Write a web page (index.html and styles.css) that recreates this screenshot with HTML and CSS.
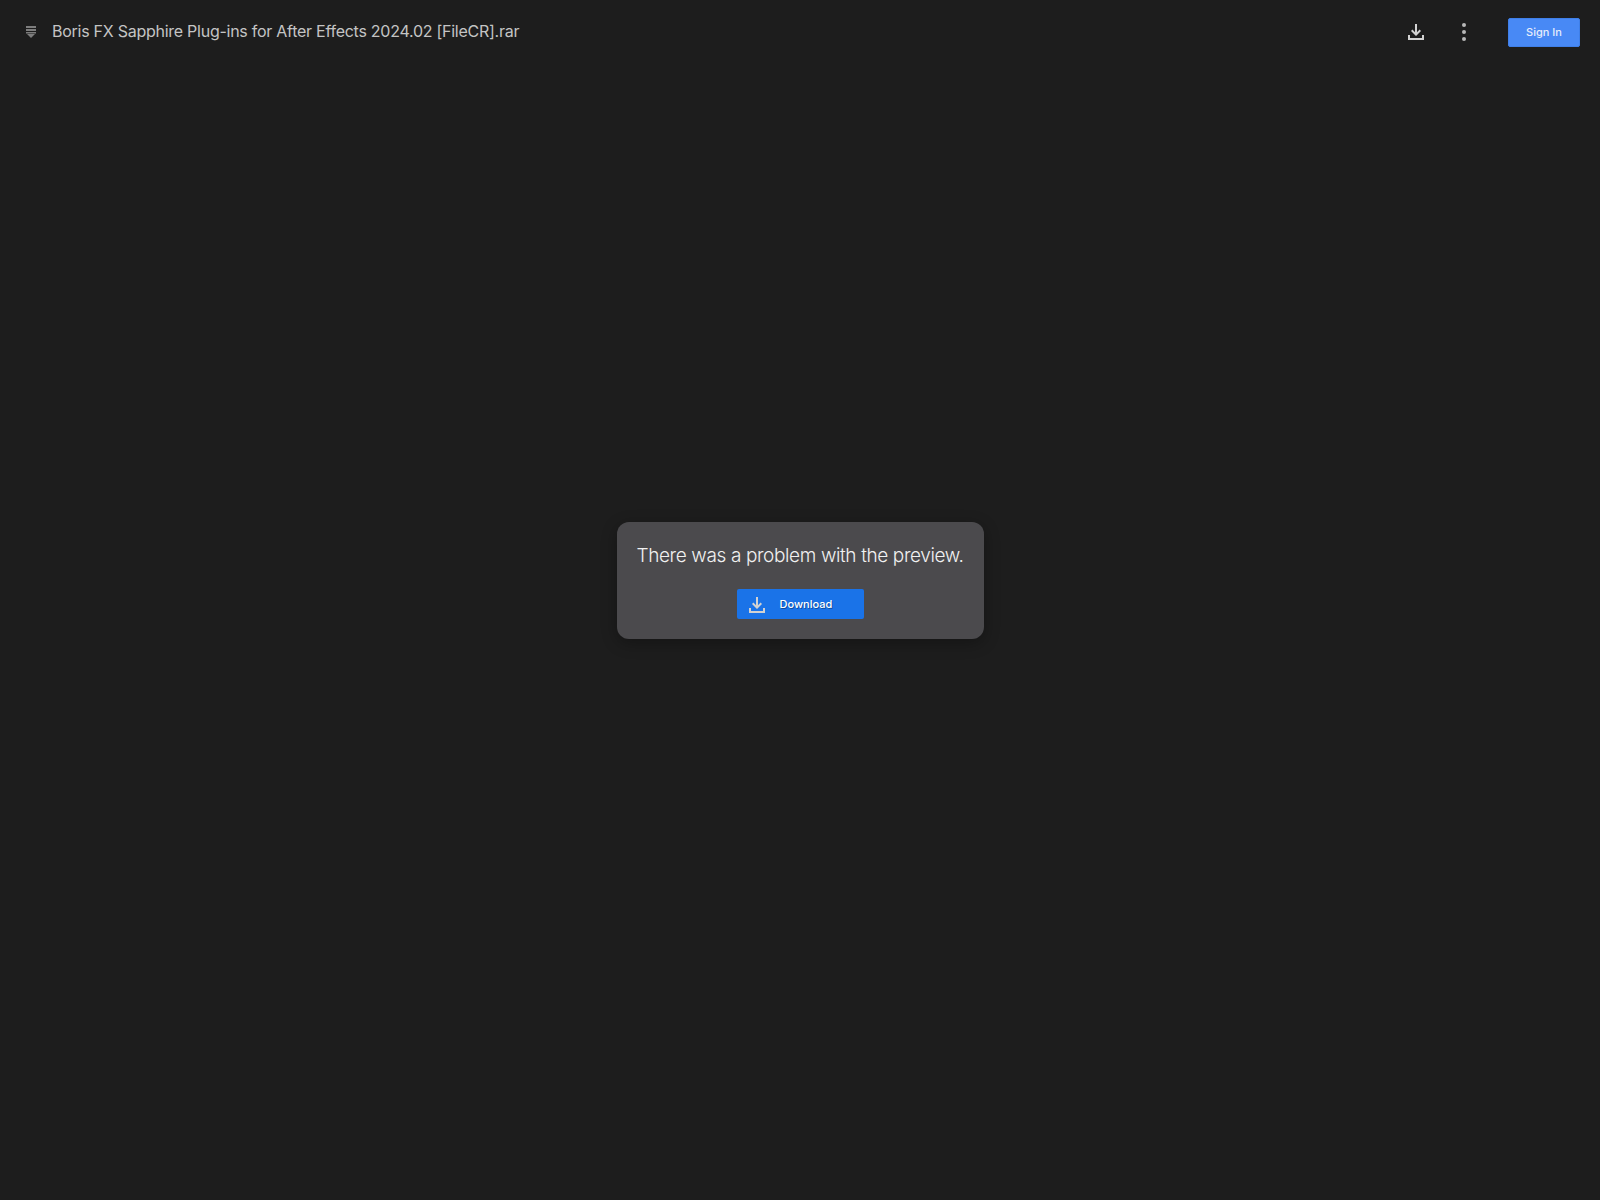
FILE: index.html
```html
<!DOCTYPE html>
<html lang="en">
<head>
<meta charset="utf-8">
<title>Boris FX Sapphire Plug-ins for After Effects 2024.02 [FileCR].rar</title>
<link rel="stylesheet" href="styles.css">
</head>
<body>
<div class="page">
  <header class="topbar">
    <div class="file">
      <svg class="file-icon" width="10" height="12" viewBox="0 0 10 12"><path fill="#7d7d7d" d="M0 0h10v2H0zM0 3h10v2H0zM0 6h10v1.500H0zM1 8h8L5 12z"/></svg>
      <span class="file-name">Boris FX Sapphire Plug-ins for After Effects 2024.02 [FileCR].rar</span>
    </div>
    <div class="actions">
      <button class="icon-btn"><svg width="24" height="24" viewBox="0 0 24 24"><path fill="#d2d2d2" d="M18 15v3H6v-3H4v5h16v-5h-2zm-1-4l-1.410-1.410L13 12.170V4h-2v8.170L8.410 9.590 7 11l5 5 5-5z"/></svg></button>
      <button class="icon-btn more"><svg width="24" height="24" viewBox="0 0 24 24"><g fill="#b8b8b8"><circle cx="12" cy="5" r="2"/><circle cx="12" cy="12" r="2"/><circle cx="12" cy="19" r="2"/></g></svg></button>
      <button class="signin">Sign In</button>
    </div>
  </header>
  <main class="stage">
    <div class="dialog">
      <p class="message">There was a problem with the preview.</p>
      <button class="download">
        <svg width="24" height="24" viewBox="0 0 24 24"><path fill="#d2d2d2" d="M18 15v3H6v-3H4v5h16v-5h-2zm-1-4l-1.410-1.410L13 12.170V4h-2v8.170L8.410 9.590 7 11l5 5 5-5z"/></svg>
        <span class="download-label">Download</span>
      </button>
    </div>
  </main>
</div>
</body>
</html>
```
FILE: styles.css
```css
* { box-sizing: border-box; }
html, body { margin: 0; height: 100%; }
body { background: #1d1d1d; font-family: "Inter", "Liberation Sans", sans-serif; }
.page { height: 1200px; display: flex; flex-direction: column; }
.topbar { height: 64px; display: flex; align-items: center; justify-content: space-between; padding: 0 20px 0 26px; flex: none; }
.file { display: flex; align-items: center; gap: 16px; }
.file-icon { display: block; }
.file-name { color: #c4c4c4; font-size: 16px; font-weight: 400; line-height: 20px; letter-spacing: -0.26px; white-space: nowrap; margin-top: -2px; }
.actions { display: flex; align-items: center; }
button { border: 0; padding: 0; font-family: inherit; cursor: pointer; }
.icon-btn { width: 24px; height: 24px; background: none; display: block; margin-right: 24px; }
.icon-btn svg { display: block; }
.more { margin-right: 32px; }
.signin { width: 72px; height: 29px; background: #4889f5; border: 1px solid #3f7fe8; color: #e6edfb; font-size: 11px; font-weight: 500; border-radius: 2px; }
.stage { flex: 1; display: flex; align-items: flex-start; justify-content: center; padding-top: 458px; }
.dialog { width: 367px; height: 117px; background: #4b4a4d; border-radius: 12px; box-shadow: 0 4px 16px rgba(0,0,0,.3); display: flex; flex-direction: column; align-items: center; padding-top: 22px; }
.message { margin: 0; color: #f1f1f1; font-size: 19px; line-height: 24px; letter-spacing: -0.38px; white-space: nowrap; font-weight: 300; }
.download { margin-top: 21px; width: 127px; height: 30px; background: #1a73e8; border-radius: 2px; color: #fff; font-size: 11px; font-weight: 500; display: flex; align-items: center; padding-left: 8px; gap: 11px; }
.download svg { display: block; margin-top: 2px; }
.download-label { text-shadow: 1px 1px 0 rgba(0,0,0,.35); }
```
